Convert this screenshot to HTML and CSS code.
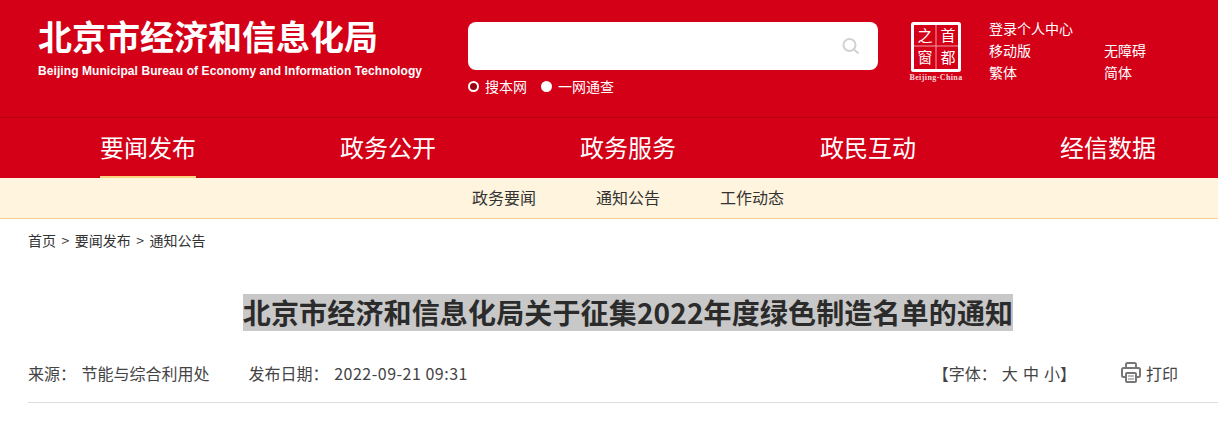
FILE: index.html
```html
<!DOCTYPE html>
<html>
<head>
    <title>北京市经济和信息化局</title>
    <meta charset="utf-8">
    <link rel="stylesheet" href="styles.css">
</head>
<body>
    <!-- Header -->
    <header class="header">
        <div class="brand">
            <div class="brand-cn">北京市经济和信息化局</div>
            <div class="brand-en">Beijing Municipal Bureau of Economy and Information Technology</div>
        </div>
        <div class="search">
            <div class="search-box">
                <svg class="search-icon" width="18" height="16" viewBox="0 0 18 16">
                    <circle cx="7.5" cy="7" r="6" fill="none" stroke="#d2d2d2" stroke-width="2"/>
                    <path d="M12 11.5L16.5 15.5" stroke="#d2d2d2" stroke-width="2"/>
                </svg>
            </div>
            <div class="search-scope">
                <span class="scope"><i class="radio radio-on"></i>搜本网</span>
                <span class="scope"><i class="radio"></i>一网通查</span>
            </div>
        </div>
        <div class="capital">
            <svg class="capital-mark" width="50" height="50" viewBox="0 0 50 50">
                <rect x="1.500" y="1.500" width="47" height="47" rx="1" fill="#d40018" stroke="#fff" stroke-width="3"/>
                <path d="M25 3V47M3 24H47" stroke="#f0a0a8" stroke-width="1"/>
                <text class="seal" x="14" y="19" text-anchor="middle">之</text>
                <text class="seal" x="37" y="19" text-anchor="middle">首</text>
                <text class="seal" x="14" y="41" text-anchor="middle">窗</text>
                <text class="seal" x="37" y="41" text-anchor="middle">都</text>
            </svg>
            <div class="capital-name">Beijing-China</div>
        </div>
        <div class="links">
            <a class="wide">登录个人中心</a>
            <a>移动版</a><a>无障碍</a>
            <a>繁体</a><a>简体</a>
        </div>
    </header>

    <!-- Main nav -->
    <nav class="nav">
        <a class="active">要闻发布</a>
        <a>政务公开</a>
        <a>政务服务</a>
        <a>政民互动</a>
        <a>经信数据</a>
    </nav>
    <div class="subnav">
        <a>政务要闻</a>
        <a>通知公告</a>
        <a>工作动态</a>
    </div>

    <div class="crumbs">首页<span class="sep">&gt;</span>要闻发布<span class="sep">&gt;</span>通知公告</div>

    <!-- Article head -->
    <h1 class="title"><span>北京市经济和信息化局关于征集2022年度绿色制造名单的通知</span></h1>
    <div class="meta">
        <span class="source">来源： <span class="value">节能与综合利用处</span></span>
        <span>发布日期： <span class="value stamp">2022-09-21 09:31</span></span>
        <span class="size">【字体： 大 中 小】</span>
        <span class="print">
            <svg width="20" height="21" viewBox="0 0 20 21" fill="none" stroke="#777" stroke-width="2">
                <path d="M5 6V2.500Q5 1 6.500 1H13.500Q15 1 15 2.500V6"/>
                <path d="M5 15H2.500Q1 15 1 13.500V7.500Q1 6 2.500 6H17.500Q19 6 19 7.500V13.500Q19 15 17.500 15H15"/>
                <rect x="5" y="11" width="10" height="9" rx="1"/>
                <path d="M7 14H13M7 17H13" stroke-width="1"/>
            </svg>
            打印
        </span>
    </div>
</body>
</html>
```

FILE: styles.css
```css
* {
    box-sizing: border-box;
}

body {
    margin: 0;
    font-family: "Noto Sans CJK SC", sans-serif;
    background-color: #fff;
    color: #333;
}

.header {
    height: 118px;
    display: flex;
    background-color: #d40018;
    border-bottom: 1px solid #b80014;
    color: #fff;
}

.brand {
    width: 430px;
    margin-left: 38px;
    padding-top: 15px;
}

.brand-cn {
    font-size: 34px;
    line-height: 42px;
    font-weight: bold;
}

.brand-en {
    margin-top: 6px;
    font-family: "Liberation Sans", sans-serif;
    font-size: 12px;
    line-height: 16px;
    font-weight: bold;
    letter-spacing: 0.08px;
    white-space: nowrap;
}

.search {
    width: 410px;
    padding-top: 22px;
}

.search-box {
    height: 48px;
    display: flex;
    align-items: center;
    justify-content: flex-end;
    padding-right: 18px;
    background-color: #fff;
    border-radius: 8px;
}

.search-scope {
    display: flex;
    gap: 14px;
    margin-top: 6px;
    font-size: 14px;
    line-height: 20px;
}

.scope {
    display: flex;
    align-items: center;
}

.radio {
    width: 11px;
    height: 11px;
    margin-right: 6px;
    border-radius: 50%;
    background-color: #fff;
}

.radio-on {
    background-color: #9c0010;
    border: 2px solid #fff;
}

.capital {
    width: 52px;
    margin-left: 32px;
    padding-top: 22px;
    text-align: center;
}

.capital-mark {
    display: block;
    margin: 0 auto;
}

.seal {
    font-size: 15px;
    fill: #fff;
}

.capital-name {
    margin: 1px -1px 0;
    font-family: "Liberation Serif", serif;
    font-size: 8px;
    line-height: 10px;
    font-weight: bold;
    letter-spacing: 0.4px;
    white-space: nowrap;
    color: #fbdcdc;
}

.links {
    display: grid;
    grid-template-columns: 115px 60px;
    grid-auto-rows: 22px;
    margin-left: 27px;
    padding-top: 17px;
    font-size: 14px;
    line-height: 22px;
}

.links .wide {
    grid-column: 1 / 3;
}

.nav {
    height: 60px;
    display: flex;
    gap: 144px;
    padding-left: 100px;
    background-color: #d40018;
    font-size: 24px;
    line-height: 58px;
    color: #fff;
}

.nav a {
    height: 60px;
}

.nav .active {
    border-bottom: 2px solid #ffd27f;
}

.subnav {
    height: 41px;
    display: flex;
    justify-content: center;
    gap: 60px;
    padding-left: 38px;
    background-color: #fff4de;
    border-bottom: 1px solid #ffd08a;
    font-size: 16px;
    line-height: 38px;
}

.crumbs {
    margin: 11px 0 0 28px;
    font-size: 14px;
    line-height: 20px;
}

.sep {
    margin: 0 5.500px;
}

.title {
    margin: 44px 0 0;
    padding-left: 38px;
    font-size: 28px;
    line-height: 37px;
    font-weight: bold;
    letter-spacing: 0.15px;
    text-align: center;
    color: #2b2b2b;
}

.title span {
    display: inline-block;
    background-color: #c8c8c8;
}

.meta {
    height: 72px;
    display: flex;
    align-items: center;
    margin-left: 28px;
    padding-top: 12px;
    border-bottom: 1px solid #ddd;
    font-size: 16px;
    color: #444;
}

.source {
    margin-right: 39px;
}

.value {
    margin-left: 2px;
}

.stamp {
    letter-spacing: 0.5px;
}

.size {
    margin-left: auto;
    word-spacing: 1.500px;
}

.print {
    display: flex;
    align-items: center;
    gap: 5px;
    margin: 0 40px 0 45px;
}
```
